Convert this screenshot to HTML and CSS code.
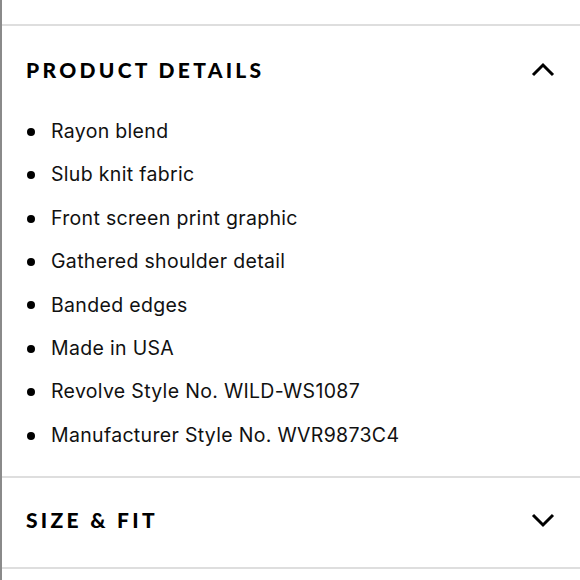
FILE: index.html
```html
<!DOCTYPE html>
<html>
<head>
<meta charset="utf-8">
<link rel="stylesheet" href="styles.css">
</head>
<body>
<div class="page">
  <section class="panel open">
    <div class="panel-head">
      <h2 class="panel-title">PRODUCT DETAILS</h2>
      <svg class="chev" width="24" height="16" viewBox="0 0 24 16"><path d="M2 13 L12 3 L22 13" fill="none" stroke="#000" stroke-width="3"/></svg>
    </div>
    <ul class="details">
      <li>Rayon blend</li>
      <li>Slub knit fabric</li>
      <li>Front screen print graphic</li>
      <li>Gathered shoulder detail</li>
      <li>Banded edges</li>
      <li>Made in USA</li>
      <li>Revolve Style No. WILD-WS1087</li>
      <li>Manufacturer Style No. WVR9873C4</li>
    </ul>
  </section>
  <section class="panel closed">
    <div class="panel-head">
      <h2 class="panel-title">SIZE &amp; FIT</h2>
      <svg class="chev" width="24" height="16" viewBox="0 0 24 16"><path d="M2 3 L12 13 L22 3" fill="none" stroke="#000" stroke-width="3"/></svg>
    </div>
  </section>
</div>
</body>
</html>
```
FILE: styles.css
```css
html, body {
  margin: 0;
  padding: 0;
  background: #fff;
}
body {
  width: 580px;
  height: 580px;
  overflow: hidden;
}
.page {
  border-left: 2px solid #8a8a8a;
  min-height: 580px;
  padding-top: 24px;
  box-sizing: border-box;
  color: #000;
}
.panel {
  border-top: 2px solid #dedede;
}
.closed {
  border-bottom: 2px solid #dedede;
}
.panel-head {
  display: flex;
  align-items: center;
  justify-content: space-between;
  padding: 32px 25px 0 24px;
  height: 24px;
}
.closed .panel-head {
  padding: 30px 25px 35px 24px;
}
.panel-title {
  margin: 0;
  font-family: "Lato", "Liberation Sans", sans-serif;
  font-weight: 900;
  font-size: 21px;
  line-height: 24px;
  letter-spacing: 3.3px;
}
.chev {
  display: block;
}
.details {
  list-style: none;
  margin: 28px 0 0 0;
  padding: 0 0 19px 25px;
  font-family: "Inter", "Liberation Sans", sans-serif;
  font-size: 19.5px;
  line-height: 43.4px;
  letter-spacing: 0.32px;
  color: #111;
}
.details li {
  display: flex;
  align-items: center;
  gap: 16px;
}
.details li::before {
  content: "";
  width: 8px;
  height: 8px;
  border-radius: 50%;
  background: #000;
  flex: none;
}
```
